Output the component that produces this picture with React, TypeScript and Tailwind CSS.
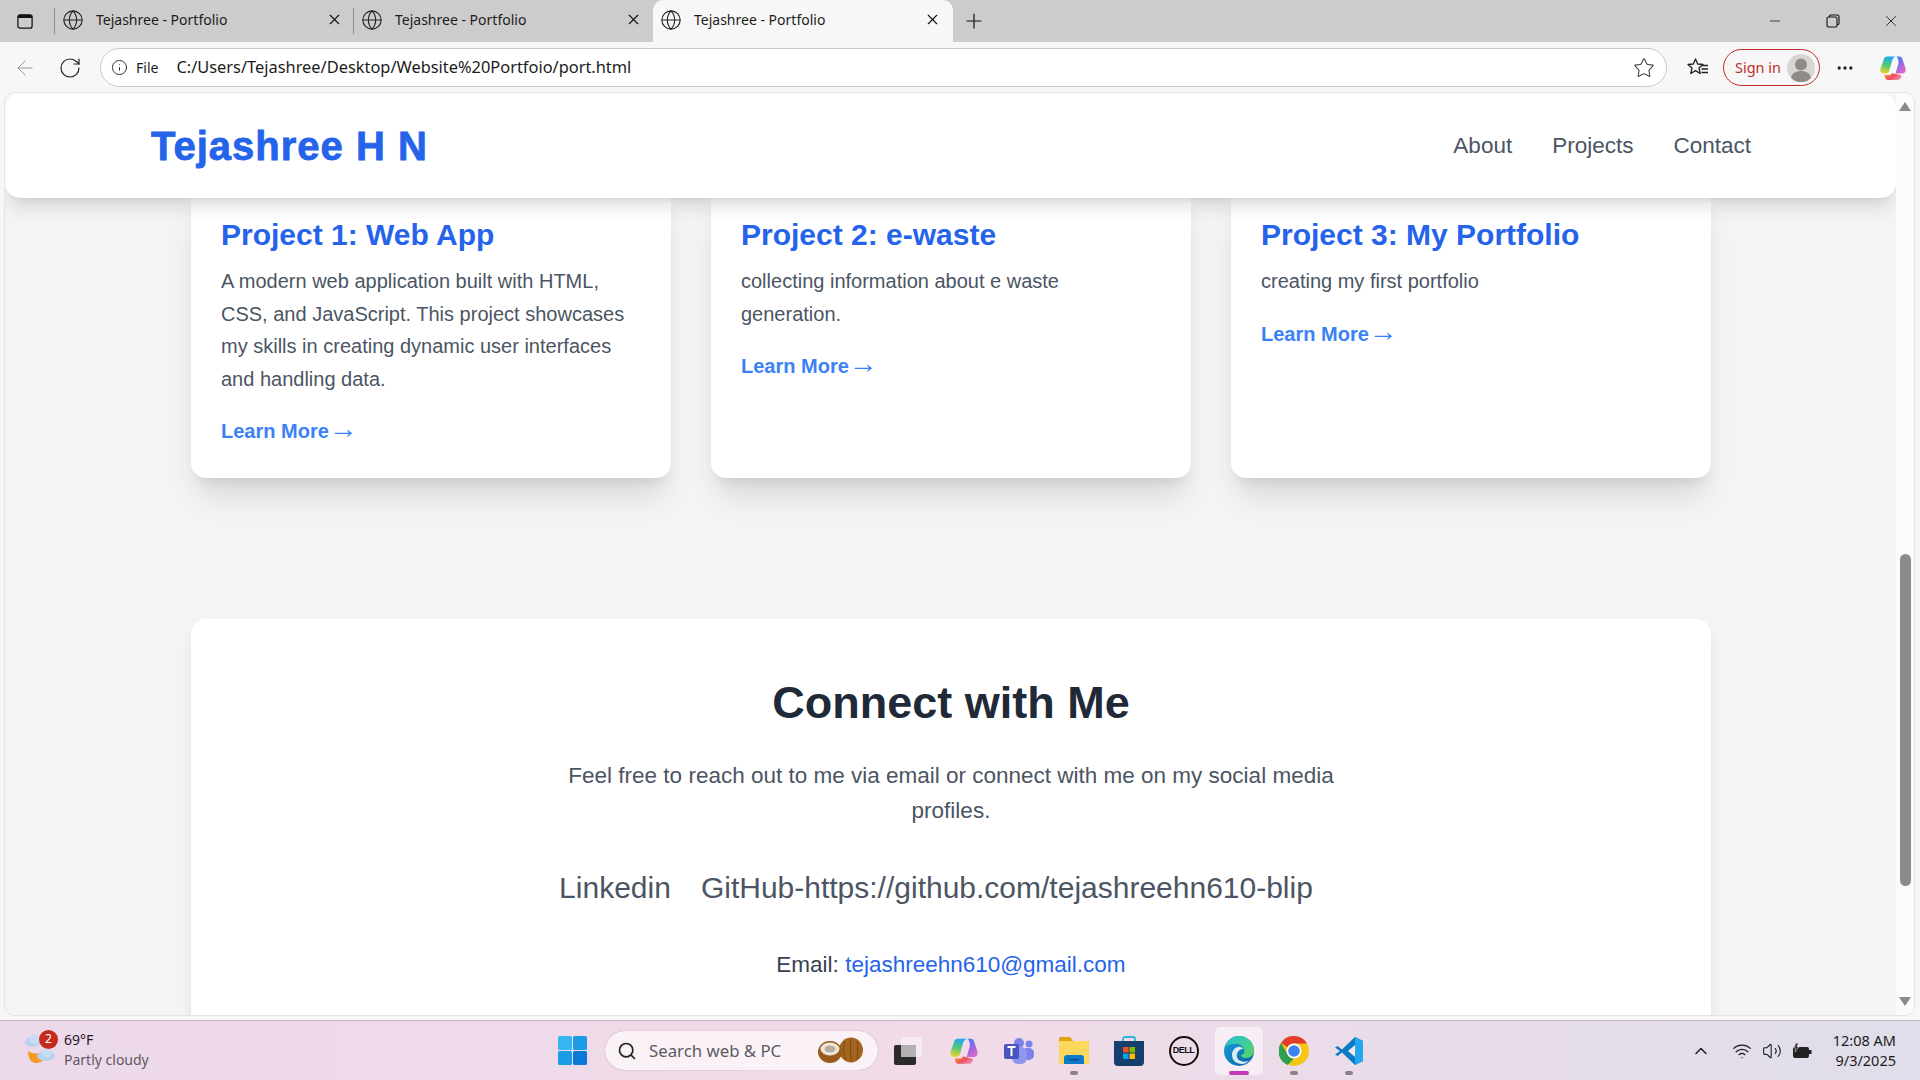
import { ChevronUp, Ellipsis, Globe, Info, Minus, Plus, RotateCw, Search, Star, Volume2, Wifi, X, ArrowLeft } from "lucide-react";

const sans = "font-['Liberation_Sans',Arial,sans-serif]";
const ui = "font-['Noto_Sans','Open_Sans',sans-serif]";

function Tab({ active, divider }: { active?: boolean; divider?: boolean }) {
  return (
    <div
      className={
        active
          ? "relative flex h-[42px] w-[300px] items-center rounded-t-[10px] bg-[#f7f7f7] pb-[3px] pl-[7px] pr-[12px]"
          : "relative flex h-[42px] w-[299px] items-center pb-[3px] pl-[7px] pr-[11px]"
      }
    >
      {divider && <div className="absolute left-[-1px] top-[8px] h-[26px] w-px bg-[#8f8f8f]" />}
      <Globe size={22} strokeWidth={1.2} className="text-[#222]" />
      <span className={`ml-[12px] flex-1 text-[14px] text-[#1c1c1c] ${ui}`}>Tejashree - Portfolio</span>
      <X size={17} strokeWidth={1.6} className="text-[#111]" />
    </div>
  );
}

function WindowChrome() {
  return (
    <div className="flex h-[42px] items-center bg-[#cccccc]">
      <div className="flex w-[55px] justify-center pr-[5px]">
        <svg width="16" height="17" viewBox="0 0 18 18" fill="none">
          <rect x="1" y="1.5" width="16" height="15" rx="2.5" stroke="#111" strokeWidth="1.4" />
          <path d="M1 4a2.5 2.5 0 0 1 2.5-2.5h11A2.5 2.5 0 0 1 17 4v1H1z" fill="#111" />
        </svg>
      </div>
      <Tab divider />
      <Tab divider />
      <Tab active />
      <Plus size={24} strokeWidth={1.2} className="ml-[9px] text-[#111]" />
      <div className="ml-auto flex items-center text-[#111]">
        <div className="flex w-[58px] justify-center">
          <Minus size={16} strokeWidth={1.1} />
        </div>
        <div className="flex w-[58px] justify-center">
          <svg width="14" height="14" viewBox="0 0 14 14" fill="none" stroke="#111" strokeWidth="1.1">
            <rect x="1" y="3" width="10" height="10" rx="1.5" />
            <path d="M3.5 3V2.3A1.3 1.3 0 0 1 4.8 1h6.4A1.8 1.8 0 0 1 13 2.8v6.4A1.3 1.3 0 0 1 11.7 10.5H11" />
          </svg>
        </div>
        <div className="flex w-[58px] justify-center">
          <X size={18} strokeWidth={1.1} />
        </div>
      </div>
    </div>
  );
}

function CopilotLogo({ size, id }: { size: number; id: string }) {
  return (
    <svg width={size} height={size} viewBox="0 0 28 28">
      <defs>
        <linearGradient id={`${id}A`} x1="0.5" y1="0" x2="0.3" y2="1">
          <stop offset="0" stopColor="#22a8ee" />
          <stop offset="0.5" stopColor="#4fc97a" />
          <stop offset="1" stopColor="#f4cf2e" />
        </linearGradient>
        <linearGradient id={`${id}B`} x1="0.3" y1="0" x2="0.8" y2="1">
          <stop offset="0" stopColor="#3f7cf0" />
          <stop offset="0.55" stopColor="#a866e0" />
          <stop offset="1" stopColor="#e86cc0" />
        </linearGradient>
        <linearGradient id={`${id}C`} x1="0" y1="0" x2="1" y2="0.6">
          <stop offset="0" stopColor="#f6a11f" />
          <stop offset="0.6" stopColor="#ee4f5f" />
          <stop offset="1" stopColor="#f08ab0" />
        </linearGradient>
      </defs>
      <path d="M8 2.500h8.500c-2 1-3 2.600-3.600 5l-2.600 9c-.5 1.800-1.700 3-3.600 3H4.500C2 19.500.8 17.100 1.600 14.500L5 4.700C5.500 3.300 6.500 2.500 8 2.500z" fill={`url(#${id}A)`} />
      <path d="M17.500 2.500h2.800c1.500 0 2.500.8 3 2.200l3.200 9.500c.8 2.600-.5 5.300-3 5.300h-7l2.800-9.500c.7-2.500-.2-5.800-1.800-7.500z" fill={`url(#${id}B)`} />
      <path d="M9 26c-1.500 0-2.600-.9-3-2.500l-.6-2.500h4.500c1.500 0 2-.5 2.500-1l.6-1 9.500 2.500-.4 1.800c-.6 1.800-1.800 2.700-3.600 2.700z" fill={`url(#${id}C)`} />
    </svg>
  );
}

function Toolbar() {
  return (
    <div className="flex h-[50px] items-center bg-[#f7f7f7] pt-[1px]">
      <div className="flex w-[100px] items-center">
        <div className="flex w-[50px] justify-center">
          <ArrowLeft size={24} strokeWidth={1} className="text-[#9a9a9a]" />
        </div>
        <div className="flex w-[40px] justify-center">
          <RotateCw size={24} strokeWidth={1.2} className="text-[#222]" />
        </div>
      </div>
      <div className="flex h-[39px] w-[1567px] items-center rounded-full border border-[#c9c9c9] bg-white pl-[10px] pr-[11px]">
        <Info size={17} strokeWidth={1.3} className="text-[#222]" />
        <span className={`ml-[8px] text-[14px] text-[#1c1c1c] ${ui}`}>File</span>
        <span className={`ml-[18px] flex-1 text-[16.4px] text-[#1c1c1c] ${ui}`}>C:/Users/Tejashree/Desktop/Website%20Portfoio/port.html</span>
        <Star size={22} strokeWidth={1.2} className="text-[#444]" />
      </div>
      <div className="flex w-[56px] justify-center pl-[6px]">
        <svg width="22" height="22" viewBox="0 0 22 22" fill="none" stroke="#222" strokeWidth="1.3" strokeLinejoin="round">
          <path d="M8.500 2l2.200 5 5.300.5-4 3.600 1.200 5.400-4.700-2.900-4.700 2.900 1.200-5.400-4-3.600 5.300-.5z" />
          <path d="M15 8.500h6M14.500 12h6.500M14.500 15.500h6.500" />
        </svg>
      </div>
      <div className="flex h-[37px] w-[97px] items-center rounded-full border border-[#c42b2b] pl-[11px] pr-[4px]">
        <span className={`flex-1 text-[14.500px] text-[#c42b2b] ${ui}`}>Sign in</span>
        <svg width="28" height="28" viewBox="0 0 28 28">
          <circle cx="14" cy="14" r="14" fill="#d8d6d2" />
          <circle cx="14" cy="10.500" r="6" fill="#8f8b86" />
          <path d="M4 24c1-5 5-7 10-7s9 2 10 7a14 14 0 0 1-20 0z" fill="#8f8b86" />
        </svg>
      </div>
      <div className="flex w-[50px] justify-center">
        <Ellipsis size={20} strokeWidth={2} className="text-[#222]" />
      </div>
      <div className="flex w-[46px] justify-center">
        <CopilotLogo size={28} id="copTool" />
      </div>
    </div>
  );
}

function ProjectCard({ title, body }: { title: string; body: string }) {
  return (
    <div className="flex h-[290px] flex-col items-start rounded-[15px] bg-white px-[30px] pt-[29px] shadow-[0_25px_31px_-6px_rgba(0,0,0,0.1),0_10px_12.5px_-7.5px_rgba(0,0,0,0.1)]">
      <h3 className="text-[30px] font-bold leading-[36px] text-[#2563eb]">{title}</h3>
      <p className="mt-[12px] text-[20px] leading-[32.500px] text-[#4b5563]">{body}</p>
      <a className="mt-[19px] text-[20px] font-semibold leading-[32px] text-[#3b82f6]">
        Learn More<span className="text-[29px] font-normal leading-none">→</span>
      </a>
    </div>
  );
}

function Page() {
  return (
    <div className={`flex min-w-0 flex-1 flex-col overflow-hidden bg-[#f3f4f6] ${sans}`}>
      <nav className="relative z-10 flex h-[105px] shrink-0 items-center justify-between rounded-[15px] bg-white pl-[146px] pr-[145px] shadow-[0_12.5px_19px_-4px_rgba(0,0,0,0.12),0_5px_7.500px_-5px_rgba(0,0,0,0.1)]">
        <span className="text-[40px] font-extrabold tracking-[1px] text-[#2563eb] [-webkit-text-stroke:0.8px_#2563eb]">Tejashree H N</span>
        <div className="flex gap-[40px] text-[22.500px] text-[#4b5563]">
          <a>About</a>
          <a>Projects</a>
          <a>Contact</a>
        </div>
      </nav>
      <div className="-mt-[10px] flex-1 pl-[186px] pr-[185px]">
        <div className="grid grid-cols-3 gap-[40px]">
          <ProjectCard
            title="Project 1: Web App"
            body="A modern web application built with HTML, CSS, and JavaScript. This project showcases my skills in creating dynamic user interfaces and handling data."
          />
          <ProjectCard title="Project 2: e-waste" body="collecting information about e waste generation." />
          <ProjectCard title="Project 3: My Portfolio" body="creating my first portfolio" />
        </div>
        <div className="mt-[141px] flex h-[500px] flex-col items-center rounded-[15px] bg-white pt-[56px] shadow-[0_10px_15px_-3px_rgba(0,0,0,0.1),0_4px_6px_-4px_rgba(0,0,0,0.1)]">
          <h2 className="text-[45px] font-bold leading-[56px] text-[#1f2937]">Connect with Me</h2>
          <p className="mt-[27px] w-[800px] text-center text-[22.500px] leading-[35px] text-[#4b5563]">
            Feel free to reach out to me via email or connect with me on my social media profiles.
          </p>
          <div className="mt-[40px] flex gap-[30px] pr-[30px] text-[30px] leading-[40px] text-[#4b5563]">
            <a>Linkedin</a>
            <a>GitHub-https://github.com/tejashreehn610-blip</a>
          </div>
          <p className="mt-[40px] text-[22.500px] text-[#374151]">
            Email: <a className="text-[#2563eb]">tejashreehn610@gmail.com</a>
          </p>
        </div>
      </div>
    </div>
  );
}

function Scrollbar() {
  return (
    <div className="flex w-[18px] shrink-0 flex-col items-center bg-[#fbfbfb] py-[9px]">
      <div className="h-0 w-0 border-x-[6px] border-b-[9px] border-x-transparent border-b-[#8a8a8a]" />
      <div className="mt-[443px] h-[332px] w-[11px] rounded-full bg-[#8b8b8b]" />
      <div className="mt-auto h-0 w-0 border-x-[6px] border-t-[9px] border-x-transparent border-t-[#8a8a8a]" />
    </div>
  );
}

function EdgeLogo() {
  return (
    <svg width="32" height="32" viewBox="0 0 32 32">
      <defs>
        <linearGradient id="edgeA" x1="0" y1="0" x2="1" y2="1">
          <stop offset="0" stopColor="#19a3d8" />
          <stop offset="1" stopColor="#0a5fa8" />
        </linearGradient>
        <linearGradient id="edgeB" x1="0" y1="0" x2="1" y2="1">
          <stop offset="0" stopColor="#22bfd6" />
          <stop offset="1" stopColor="#5ed65e" />
        </linearGradient>
      </defs>
      <circle cx="16" cy="16" r="15" fill="url(#edgeA)" />
      <path d="M2 12C4 5 10 1 16 1c8 0 15 6 15 14 0 5-4 8-8 8-3 0-5-1-5-3 3-1 4-3 3-5-1-4-5-7-10-6-4 0-7 1-9 3z" fill="url(#edgeB)" />
      <path d="M15 12c-4 1-6 4-6 8 0 5 4 9 10 9 2 0 5-1 7-3-3 1-6 1-8 0-3-1-5-4-4-7 .500-3 3-5 6-5-1-1.500-3-2.500-5-2z" fill="#fff" opacity="0.85" />
    </svg>
  );
}

function ChromeLogo() {
  return (
    <svg width="30" height="30" viewBox="0 0 30 30">
      <circle cx="15" cy="15" r="15" fill="#f5c518" />
      <path d="M15 0a15 15 0 0 1 13 7.500H15a7.500 7.500 0 0 0-6.500 3.750L2 7A15 15 0 0 1 15 0z" fill="#e33b2e" />
      <path d="M2 7l6.500 11.250A7.500 7.500 0 0 0 15 22.500L8.500 29A15 15 0 0 1 2 7z" fill="#2e9e4f" />
      <circle cx="15" cy="15" r="7.500" fill="#fff" />
      <circle cx="15" cy="15" r="5.800" fill="#3b82f0" />
    </svg>
  );
}

function VsCodeLogo() {
  return (
    <svg width="30" height="30" viewBox="0 0 30 30">
      <path d="M21 1l8 4v20l-8 4L8 16.500l-4.500 3.500L1 18.500 6 15 1 11.500 3.500 10 8 13.500z" fill="#0a7cc4" />
      <path d="M21 1l8 4v20l-8 4z" fill="#22a7f0" />
      <path d="M21 9l-7 6 7 6z" fill="#f3e7f0" />
    </svg>
  );
}

function TaskIcon({ children, dot, active }: { children: React.ReactNode; dot?: boolean; active?: boolean }) {
  return (
    <div className="flex w-[55px] justify-center">
      <div className={active ? "relative flex h-[48px] w-[48px] items-center justify-center rounded-[5px] bg-[#f7edf4]" : "relative flex h-[48px] w-[48px] items-center justify-center"}>
        {children}
        {dot && <div className="absolute bottom-0 h-[4px] w-[8px] rounded-full bg-[#8a8088]" />}
        {active && <div className="absolute bottom-0 h-[4px] w-[20px] rounded-full bg-[#c239b3]" />}
      </div>
    </div>
  );
}

function Taskbar() {
  return (
    <div className={`flex h-[60px] items-center border-t border-[#c4b3bf] bg-gradient-to-r from-[#ecd9ea] via-[#f1dbe8] to-[#dfdeea] ${ui}`}>
      <div className="flex w-[552px] items-center pl-[25px]">
        <div className="relative h-[36px] w-[38px]">
          <svg width="32" height="34" viewBox="0 0 32 34" className="absolute left-0 top-0">
            <ellipse cx="8" cy="9" rx="8" ry="5" fill="#b9d2ee" />
            <ellipse cx="9" cy="6" rx="5" ry="4.500" fill="#c8dcf2" />
            <path d="M3 18c3 2 7 3 11 2l6 5c-2 3-5 5-9 5-5 0-8-5-8-12z" fill="#f39a1f" />
            <ellipse cx="21" cy="23" rx="9" ry="5" fill="#b9d2ee" />
            <ellipse cx="22" cy="20" rx="5" ry="4.500" fill="#c8dcf2" />
          </svg>
          <div className="absolute left-[14px] top-[-3px] flex h-[19px] w-[19px] items-center justify-center rounded-full bg-[#c42b1c] text-[12px] text-white">2</div>
        </div>
        <div className="ml-[1px] flex flex-col pb-[1px] text-[14px] leading-[20px]">
          <span className="text-[#1c1c1c]">69°F</span>
          <span className="text-[#5f5a62]">Partly cloudy</span>
        </div>
      </div>
      <div className="flex h-[40px] w-[40px] items-center justify-center">
        <svg width="29" height="29" viewBox="0 0 29 29">
          <rect x="0" y="0" width="14" height="14" rx="1.500" fill="#35b7f2" />
          <rect x="15" y="0" width="14" height="14" rx="1.500" fill="#1c9be6" />
          <rect x="0" y="15" width="14" height="14" rx="1.500" fill="#1c9be6" />
          <rect x="15" y="15" width="14" height="14" rx="1.500" fill="#0a78d6" />
        </svg>
      </div>
      <div className="ml-[13px] flex h-[39px] w-[273px] items-center rounded-full bg-[#faf2f6] pl-[12px] pr-[14px] shadow-[0_0_1px_rgba(0,0,0,0.4)]">
        <Search size={20} strokeWidth={2} className="text-[#222]" />
        <span className="ml-[12px] flex-1 text-[16.800px] text-[#5f5a62]">Search web &amp; PC</span>
        <svg width="46" height="28" viewBox="0 0 46 28">
          <ellipse cx="33" cy="13" rx="12" ry="12.500" fill="#a5651f" />
          <path d="M27 4c-2 6-2 13 1 19M33 2c-1 7-1 15 1 22M39 4c1 6 1 12 0 18" stroke="#7a4512" strokeWidth="1" fill="none" />
          <ellipse cx="12" cy="15" rx="12" ry="11" fill="#9a5a1a" />
          <ellipse cx="12" cy="12" rx="9.500" ry="6.500" fill="#efe8dc" />
          <ellipse cx="12" cy="12" rx="5.500" ry="3.500" fill="#b8aea0" />
        </svg>
      </div>
      <div className="ml-[14px] flex h-[30px] w-[32px] items-center justify-center">
        <svg width="30" height="30" viewBox="0 0 30 30">
          <rect x="1" y="9" width="22" height="20" rx="2" fill="#2a2a2a" />
          <rect x="8" y="1" width="21" height="20" rx="2" fill="#f5eff3" fillOpacity="0.85" />
          <rect x="8" y="9" width="15" height="12" fill="#b5b1b3" />
        </svg>
      </div>
      <div className="ml-[12px] flex items-center">
        <TaskIcon>
          <CopilotLogo size={30} id="copTask" />
        </TaskIcon>
        <TaskIcon>
          <svg width="32" height="28" viewBox="0 0 32 28">
            <circle cx="26" cy="7" r="3.500" fill="#7b83eb" />
            <rect x="19" y="11" width="12" height="12" rx="5" fill="#7b83eb" />
            <circle cx="16" cy="6" r="5" fill="#7b83eb" />
            <rect x="9" y="10" width="15" height="17" rx="6" fill="#8f96ee" />
            <rect x="1" y="7" width="15" height="15" rx="2" fill="#4b53bc" />
            <path d="M4.500 10h8M8.500 10v9" stroke="#fff" strokeWidth="2" />
          </svg>
        </TaskIcon>
        <TaskIcon dot>
          <svg width="30" height="27" viewBox="0 0 30 27">
            <path d="M0 2a2 2 0 0 1 2-2h9l3 4h16v4H0z" fill="#e0a30e" />
            <rect x="0" y="4" width="30" height="23" rx="1" fill="#fdd75e" />
            <path d="M5 27v-6a3 3 0 0 1 3-3h14a3 3 0 0 1 3 3v6z" fill="#0f78c8" />
            <rect x="10" y="22" width="10" height="1.500" fill="#0a4f88" />
          </svg>
        </TaskIcon>
        <TaskIcon>
          <svg width="30" height="30" viewBox="0 0 30 30">
            <path d="M9 6V3a2 2 0 0 1 2-2h8a2 2 0 0 1 2 2v3" fill="none" stroke="#2fb2d8" strokeWidth="1.800" />
            <path d="M0 5h30v21a4 4 0 0 1-4 4H4a4 4 0 0 1-4-4z" fill="#173f6e" />
            <rect x="9" y="11" width="5.500" height="5.500" fill="#f25022" />
            <rect x="15.500" y="11" width="5.500" height="5.500" fill="#7fba00" />
            <rect x="9" y="17.500" width="5.500" height="5.500" fill="#00a4ef" />
            <rect x="15.500" y="17.500" width="5.500" height="5.500" fill="#ffb900" />
          </svg>
        </TaskIcon>
        <TaskIcon>
          <div className="flex h-[30px] w-[30px] items-center justify-center rounded-full border-2 border-[#111]">
            <span className={`text-[9px] font-bold tracking-[-0.5px] text-[#111] ${sans}`}>DELL</span>
          </div>
        </TaskIcon>
        <TaskIcon active>
          <EdgeLogo />
        </TaskIcon>
        <TaskIcon dot>
          <ChromeLogo />
        </TaskIcon>
        <TaskIcon dot>
          <VsCodeLogo />
        </TaskIcon>
      </div>
      <div className="ml-auto flex items-center text-[#1c1c1c]">
        <ChevronUp size={20} strokeWidth={1.8} />
        <Wifi size={20} strokeWidth={1.5} className="ml-[21px]" />
        <Volume2 size={20} strokeWidth={1.3} className="ml-[10px]" />
        <svg width="20" height="16" viewBox="0 0 20 16" className="ml-[10px]">
          <rect x="1" y="4" width="16" height="11" rx="2" fill="#222" />
          <rect x="17" y="7" width="2.500" height="4" fill="#222" />
          <path d="M4 0L2 5h2l-1 4 4-5H5l1-4z" fill="#222" stroke="#f0dbe8" strokeWidth="0.5" />
        </svg>
        <div className="ml-[21px] mr-[24px] flex flex-col items-end pb-[2px] text-[14.500px] leading-[20px]">
          <span>12:08 AM</span>
          <span>9/3/2025</span>
        </div>
      </div>
    </div>
  );
}

export default function App() {
  return (
    <div className="flex h-[1080px] w-[1920px] flex-col overflow-hidden bg-[#f7f7f7]">
      <WindowChrome />
      <Toolbar />
      <div className="flex min-h-0 flex-1 flex-col pl-[4px] pr-[5px] pb-[4px]">
        <div className="flex min-h-0 flex-1 overflow-hidden rounded-[10px] border border-[#e4e4e4]">
          <Page />
          <Scrollbar />
        </div>
      </div>
      <Taskbar />
    </div>
  );
}
